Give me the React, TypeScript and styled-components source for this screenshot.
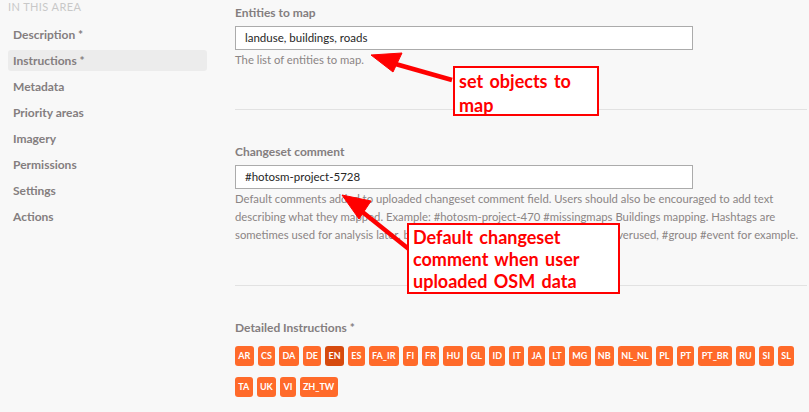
import React from "react";
import styled, { createGlobalStyle } from "styled-components";

const Global = createGlobalStyle`
  html, body { margin: 0; padding: 0; background: #f8f8f8; }
  body { font-family: "Lato", "Open Sans", sans-serif; }
  * { box-sizing: border-box; }
`;

const Page = styled.div`
  position: relative;
  display: flex;
  width: 809px;
  height: 412px;
  overflow: hidden;
  background: #f8f8f8;
`;

const Sidebar = styled.aside`
  width: 235px;
  flex: none;
  padding: 0 28px 0 8px;
`;

const AreaTitle = styled.div`
  font-size: 11px;
  line-height: 14px;
  color: #c8c8c8;
  text-transform: uppercase;
  letter-spacing: 0.4px;
  margin-bottom: 10px;
`;

const NavList = styled.ul`
  list-style: none;
  margin: 0;
  padding: 0;
  display: flex;
  flex-direction: column;
  gap: 5px;
`;

const NavItem = styled.li<{ $active?: boolean }>`
  height: 21px;
  line-height: 21px;
  padding-left: 5px;
  font-size: 12px;
  font-weight: 700;
  color: #847e7f;
  border-radius: 3px;
  background: ${(p) => (p.$active ? "#ececec" : "transparent")};
`;

const Main = styled.main`
  width: 572px;
  flex: none;
  padding-top: 4px;
`;

const Section = styled.section<{ $bottom: number }>`
  padding-bottom: ${(p) => p.$bottom}px;
  border-bottom: 1px solid #e2e2e2;
  margin-bottom: 33px;
  &:last-child { border-bottom: none; margin-bottom: 0; }
`;

const Label = styled.div`
  font-size: 12px;
  line-height: 18px;
  font-weight: 700;
  color: #847e7f;
  margin-bottom: 4px;
`;

const Input = styled.div`
  width: 458px;
  height: 24px;
  background: #fff;
  border: 1px solid #ababab;
  padding-left: 9px;
  font-size: 11.5px;
  line-height: 22px;
  color: #262626;
`;

const Help = styled.p`
  margin: 1px 0 0;
  font-size: 11.3px;
  line-height: 18px;
  color: #8b8585;
`;

const Langs = styled.div`
  display: flex;
  flex-wrap: wrap;
  column-gap: 4px;
  row-gap: 11px;
  margin-top: 9px;
`;

const Lang = styled.span<{ $active?: boolean }>`
  height: 20px;
  line-height: 20px;
  padding: 0 3.3px;
  min-width: 15px;
  text-align: center;
  border-radius: 3px;
  font-size: 9px;
  font-weight: 700;
  color: #fff;
  background: ${(p) => (p.$active ? "#d64a0e" : "#ff6a2a")};
`;

const Note = styled.div<{ $x: number; $y: number; $w: number; $h: number; $lh: number }>`
  position: absolute;
  left: ${(p) => p.$x}px;
  top: ${(p) => p.$y}px;
  width: ${(p) => p.$w}px;
  height: ${(p) => p.$h}px;
  background: #fff;
  border: 2px solid #ff0000;
  padding: 1px 0 0 4px;
  font-family: "Lato", "Liberation Sans", sans-serif;
  font-weight: 700;
  font-size: 18px;
  word-spacing: 2px;
  line-height: ${(p) => p.$lh}px;
  color: #ff0000;
`;

const Arrows = styled.svg`
  position: absolute;
  left: 0;
  top: 0;
  pointer-events: none;
`;

const langs = [
  "AR", "CS", "DA", "DE", "EN", "ES", "FA_IR", "FI", "FR", "HU", "GL", "ID", "IT",
  "JA", "LT", "MG", "NB", "NL_NL", "PL", "PT", "PT_BR", "RU", "SI", "SL", "TA", "UK",
  "VI", "ZH_TW",
];

const nav = [
  "Description *", "Instructions *", "Metadata", "Priority areas", "Imagery",
  "Permissions", "Settings", "Actions",
];

export default function App() {
  return (
    <Page>
      <Global />
      <Sidebar>
        <AreaTitle>In this area</AreaTitle>
        <NavList>
          {nav.map((n) => (
            <NavItem key={n} $active={n === "Instructions *"}>
              {n}
            </NavItem>
          ))}
        </NavList>
      </Sidebar>
      <Main>
        <Section $bottom={40}>
          <Label>Entities to map</Label>
          <Input>landuse, buildings, roads</Input>
          <Help>The list of entities to map.</Help>
        </Section>
        <Section $bottom={41}>
          <Label>Changeset comment</Label>
          <Input>#hotosm-project-5728</Input>
          <Help>
            Default comments added to uploaded changeset comment field. Users should also be
            encouraged to add text describing what they mapped. Example: #hotosm-project-470
            #missingmaps Buildings mapping. Hashtags are sometimes used for analysis later, but
            should be human informative and not overused, #group #event for example.
          </Help>
        </Section>
        <Section $bottom={0}>
          <Label>Detailed Instructions *</Label>
          <Langs>
            {langs.map((l) => (
              <Lang key={l} $active={l === "EN"}>
                {l}
              </Lang>
            ))}
          </Langs>
        </Section>
      </Main>
      <Arrows width="809" height="412" viewBox="0 0 809 412">
        <g fill="#ff0000" stroke="#ff0000">
          <line x1="452" y1="80" x2="392" y2="63" strokeWidth="4.5" />
          <polygon points="371,55 402,53 393,72" strokeWidth="1" />
          <line x1="410" y1="250" x2="360" y2="210" strokeWidth="4.5" />
          <polygon points="342,195 371,201 359,219" strokeWidth="1" />
        </g>
      </Arrows>
      <Note $x={453} $y={66} $w={146} $h={50} $lh={24}>
        set objects to
        <br />
        map
      </Note>
      <Note $x={407} $y={223} $w={213} $h={71} $lh={22}>
        Default changeset
        <br />
        comment when user
        <br />
        uploaded OSM data
      </Note>
    </Page>
  );
}
